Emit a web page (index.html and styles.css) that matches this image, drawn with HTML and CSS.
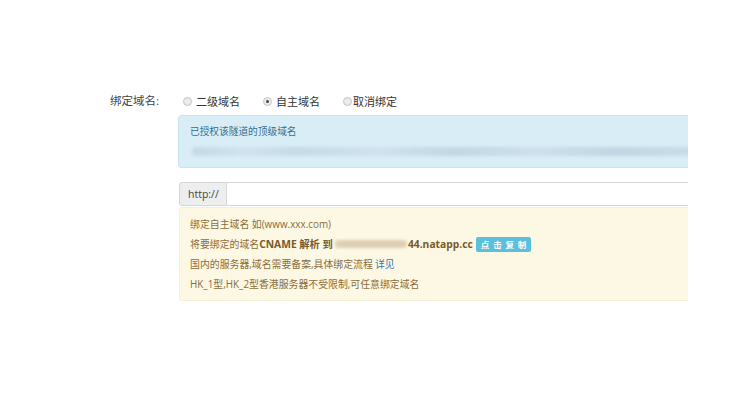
FILE: index.html
```html
<!DOCTYPE html>
<html lang="zh-CN">
<head>
<meta charset="utf-8">
<title>绑定域名</title>
<link rel="stylesheet" href="styles.css">
</head>
<body>
<div class="form-row">
  <div class="label">绑定域名:</div>
  <div class="field">
    <div class="radios">
      <label class="opt"><span class="radio"></span><span class="opt-text">二级域名</span></label>
      <label class="opt"><span class="radio checked"></span><span class="opt-text">自主域名</span></label>
      <label class="opt tight"><span class="radio"></span><span class="opt-text">取消绑定</span></label>
    </div>
    <div class="clip">
      <div class="alert info">
        <div class="info-title">已授权该隧道的顶级域名</div>
        <div class="blur-line"></div>
      </div>
      <div class="input-group">
        <span class="addon">http://</span>
        <span class="input"></span>
      </div>
      <div class="alert warn">
        <div class="line">绑定自主域名 如(www.xxx.com)</div>
        <div class="line">将要绑定的域名<b>CNAME 解析 到</b> <span class="blur-domain"></span><b>44.natapp.cc</b> <span class="copy-btn">点 击 复 制</span></div>
        <div class="line">国内的服务器,域名需要备案,具体绑定流程 <a class="link" href="#">详见</a></div>
        <div class="line">HK_1型,HK_2型香港服务器不受限制,可任意绑定域名</div>
      </div>
    </div>
  </div>
</div>
</body>
</html>
```

FILE: styles.css
```css
html, body {
  margin: 0;
  padding: 0;
  background: #fff;
}
body {
  font-family: "Open Sans", "Noto Sans CJK SC", sans-serif;
  color: #333;
}
.form-row {
  display: flex;
  padding-top: 91px;
}
.label {
  width: 68px;
  padding-left: 110px;
  font-size: 11.5px;
  line-height: 20px;
  color: #444;
}
.field {
  display: flex;
  flex-direction: column;
}
.radios {
  display: flex;
  align-items: center;
  height: 20px;
  padding-left: 5px;
}
.opt {
  display: flex;
  align-items: center;
  font-size: 11px;
  color: #333;
  margin-right: 23px;
}
.radio {
  width: 7px;
  height: 7px;
  border-radius: 50%;
  border: 1px solid #c4c4c4;
  background: #ececec;
  margin-right: 4px;
  position: relative;
}
.radio.checked::after {
  content: "";
  position: absolute;
  left: 2px;
  top: 2px;
  width: 3px;
  height: 3px;
  border-radius: 50%;
  background: #444;
}
.opt.tight .radio {
  margin-right: 1px;
}
.clip {
  width: 510px;
  overflow: hidden;
  margin-top: 4px;
}
.alert {
  width: 540px;
  box-sizing: border-box;
  border: 1px solid;
  border-radius: 3px;
}
.info {
  background: #d9edf7;
  border-color: #c9e4f0;
  color: #31708f;
  height: 53px;
  padding: 9px 11px 0;
}
.info-title {
  font-size: 9.7px;
  line-height: 14px;
}
.blur-line {
  margin-top: 8px;
  margin-left: 2px;
  height: 9px;
  width: 530px;
  background: linear-gradient(90deg, #c3d9e6 0%, #d0e3ee 10%, #c6dbe7 20%, #cfe2ed 35%, #c2d7e4 50%, #cde0ec 65%, #c1d6e3 80%, #ccdfea 100%);
  border-radius: 4px;
  filter: blur(1.5px);
}
.input-group {
  display: flex;
  width: 540px;
  height: 24px;
  margin-top: 14px;
  margin-left: 1px;
}
.addon {
  display: flex;
  align-items: center;
  box-sizing: border-box;
  width: 48px;
  padding-left: 8px;
  background: #eee;
  border: 1px solid #d6d6d6;
  border-radius: 3px 0 0 3px;
  font-size: 10.5px;
  color: #444;
}
.input {
  flex: 1;
  border: 1px solid #d6d6d6;
  border-left: none;
  background: #fff;
}
.warn {
  margin-top: 1px;
  margin-left: 1px;
  background: #fcf8e3;
  border-color: #f6efd6;
  color: #8a6d3b;
  padding: 6px 10px 6px;
  font-size: 9.9px;
  line-height: 20px;
}
.line {
  display: flex;
  align-items: center;
  white-space: nowrap;
  height: 20px;
}
.line b {
  font-weight: 700;
  color: #7a5a2b;
  font-size: 10.3px;
}
.blur-domain {
  display: inline-block;
  width: 72px;
  height: 8px;
  margin: 0 1px 0 2px;
  background: #ddcfb3;
  border-radius: 4px;
  filter: blur(1.5px);
}
.copy-btn {
  display: inline-block;
  margin-left: 3px;
  background: #5bc0de;
  color: #fff;
  font-size: 8.5px;
  font-weight: 700;
  line-height: 15px;
  padding: 0 4px 0 5px;
  border-radius: 2px;
  letter-spacing: 0.8px;
}
.link {
  color: #337ab7;
  text-decoration: none;
  margin-left: 2px;
}
```
